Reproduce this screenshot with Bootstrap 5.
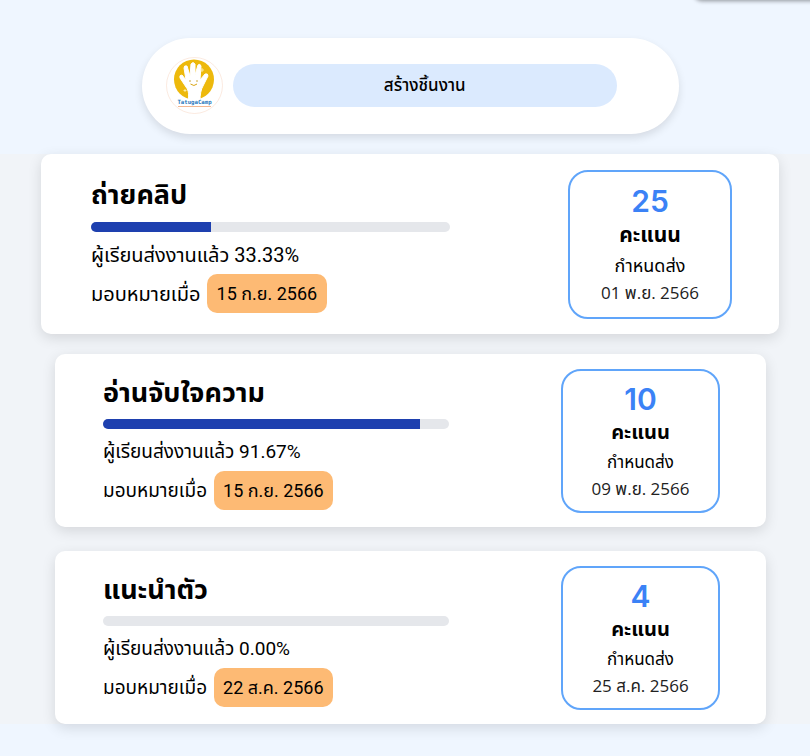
<!DOCTYPE html>
<html lang="th">
<head>
<meta charset="utf-8">
<meta name="viewport" content="width=device-width, initial-scale=1">
<title>TatugaCamp</title>
<link href="https://cdn.jsdelivr.net/npm/bootstrap@5.3.0/dist/css/bootstrap.min.css" rel="stylesheet">
<style>
body{background:#eff6ff;color:#000;font-family:Roboto,"Noto Sans Thai","Noto Sans",sans-serif;font-size:19px;line-height:28px}
.corner-panel{position:absolute;right:-12px;top:-20px;width:128px;height:20px;border-radius:8px;background:#fff;box-shadow:0 1px 4px #00000066}
.page-top{padding:38px 0 20px}
.creator-bar{width:66.3%;margin-left:17.5%;height:96px;padding:0 62px 2px 24px;gap:10px;box-shadow:0 4px 8px #0000001c}
.creator-bar svg{width:57px;height:57px}
.create-btn{background:#dbeafe;border:0;border-radius:22px;height:43px;font-size:17px;font-weight:500;color:#000}
.work-list{background:#f1f4f8;padding:0 31px 0 41px}
.work{background:#fff;border-radius:10px;padding:15px 46px 14px 48px;margin:0 13px 24px 14px;min-height:173px;box-shadow:0 4px 14px #0000001f}
.work:last-child{margin-bottom:0}
.work.active{margin:0 0 20px;padding:16px 47px 15px 50px;min-height:180px}
.details{flex:0 0 56%;padding-top:7px}
.work h2{font-size:27px;line-height:34px;font-weight:700;margin:0 0 9px}
.progress{height:10px;border-radius:5px;background:#e5e7eb}
.progress-bar{background:#1e40af}
.sent{margin-top:9px;white-space:nowrap}
.assigned{margin-top:5px;white-space:nowrap;gap:7px}
.date-tag{background:#fdba74;border-radius:10px;padding:6px 9px 5px;font-size:18px}
.active .details{font-size:20px}
.active h2{padding-top:1px;margin-bottom:10px}
.active .assigned{gap:6px}
.active .date-tag{padding:6px 10px 5px}
.score{width:159px;height:144px;border:2px solid #60a5fa;border-radius:20px;padding-top:12px;font-size:17px}
.score strong{font-family:"Inter",sans-serif;font-size:30px;line-height:32px;font-weight:600;color:#3b82f6}
.score b{font-size:20px;line-height:34px}
.score span,.score time{line-height:28px;font-family:"Open Sans","Noto Sans Thai","Noto Sans",sans-serif}
.score span{line-height:26px}
.score time{color:#222}
.active .score{width:164px;height:149px;padding-top:13px}
.active .score b{font-size:21px;line-height:36px}
.active .score span{font-size:18px;line-height:25px}
.active .score time{line-height:30px}
</style>
<script src="https://cdn.jsdelivr.net/npm/bootstrap@5.3.0/dist/js/bootstrap.bundle.min.js"></script>
</head>
<body class="position-relative overflow-x-hidden min-vh-100">
<div class="corner-panel"></div>
<header class="page-top">
<div class="creator-bar d-flex align-items-center bg-white rounded-pill">
<svg class="flex-shrink-0" viewBox="0 0 57 57" role="img" aria-label="TatugaCamp">
<circle cx="28.500" cy="28.500" r="28" fill="#fff" stroke="#f8dccb" stroke-width=".6"/>
<circle cx="28" cy="22.500" r="20" fill="#edb90c"/>
<path d="M22 44C23 38 23 34 20 30L14 21Q13 18 16 18L20 23L18 11Q18 8 21 9L24 19L25 7Q27 4 29 7L29 18L32 8Q34 6 35 9L34 23L39 17Q42 16 42 19L37 29Q34 34 34 44Z" fill="#fff" stroke="#fff" stroke-width="1" stroke-linejoin="round"/>
<circle cx="24" cy="24" r=".8" fill="#c79c20"/><circle cx="31" cy="24" r=".8" fill="#c79c20"/>
<path d="M24.500 27Q28 30 31 27" fill="none" stroke="#d9a514" stroke-width="1"/>
<path d="M36 11v4M34 13h4M19 32v3M17.500 33.500h3" stroke="#fff4bd" stroke-width=".8"/>
<text x="28.500" y="47" text-anchor="middle" font-family="DejaVu Sans Mono,monospace" font-size="5.700" font-weight="700" fill="#2878bd">TatugaCamp</text>
<path d="M12 49.500H45" stroke="#f3b892" stroke-width="1"/>
</svg>
<button type="button" class="create-btn flex-grow-1">สร้างชิ้นงาน</button>
</div>
</header>
<main class="work-list">
<article class="work active d-flex justify-content-between">
<div class="details"><h2>ถ่ายคลิป</h2>
<div class="progress" role="progressbar" aria-label="ถ่ายคลิป" aria-valuenow="33.33" aria-valuemin="0" aria-valuemax="100"><div class="progress-bar" style="width:33.33%"></div></div>
<div class="sent">ผู้เรียนส่งงานแล้ว 33.33%</div>
<div class="assigned d-flex align-items-center"><span>มอบหมายเมื่อ</span><time class="date-tag">15 ก.ย. 2566</time></div></div>
<div class="score d-flex flex-column align-items-center flex-shrink-0"><strong>25</strong><b>คะแนน</b><span>กำหนดส่ง</span><time>01 พ.ย. 2566</time></div>
</article>
<article class="work d-flex justify-content-between">
<div class="details"><h2>อ่านจับใจความ</h2>
<div class="progress" role="progressbar" aria-label="อ่านจับใจความ" aria-valuenow="91.67" aria-valuemin="0" aria-valuemax="100"><div class="progress-bar" style="width:91.67%"></div></div>
<div class="sent">ผู้เรียนส่งงานแล้ว 91.67%</div>
<div class="assigned d-flex align-items-center"><span>มอบหมายเมื่อ</span><time class="date-tag">15 ก.ย. 2566</time></div></div>
<div class="score d-flex flex-column align-items-center flex-shrink-0"><strong>10</strong><b>คะแนน</b><span>กำหนดส่ง</span><time>09 พ.ย. 2566</time></div>
</article>
<article class="work d-flex justify-content-between">
<div class="details"><h2>แนะนำตัว</h2>
<div class="progress" role="progressbar" aria-label="แนะนำตัว" aria-valuenow="0" aria-valuemin="0" aria-valuemax="100"><div class="progress-bar" style="width:0%"></div></div>
<div class="sent">ผู้เรียนส่งงานแล้ว 0.00%</div>
<div class="assigned d-flex align-items-center"><span>มอบหมายเมื่อ</span><time class="date-tag">22 ส.ค. 2566</time></div></div>
<div class="score d-flex flex-column align-items-center flex-shrink-0"><strong>4</strong><b>คะแนน</b><span>กำหนดส่ง</span><time>25 ส.ค. 2566</time></div>
</article>
</main>
</body>
</html>
